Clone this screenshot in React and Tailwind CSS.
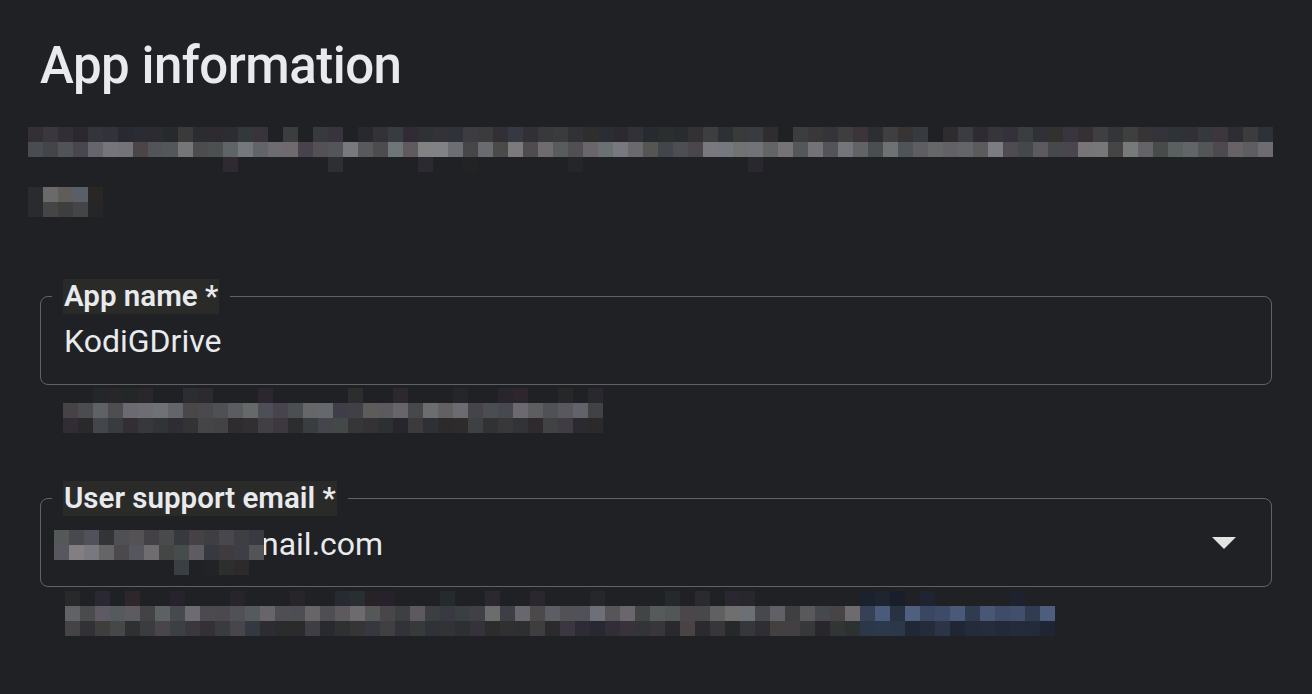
import React from 'react';

// deterministic noise so the blurred text looks the same every render
function makeRng(seed) {
  let s = seed;
  return () => {
    s = (s * 1103515245 + 12345) & 0x7fffffff;
    return s / 0x7fffffff;
  };
}

function cellColor(rand, lo, hi, blue) {
  const v = lo + rand() * (hi - lo);
  if (blue) {
    return `rgb(${Math.round(v * 0.7)}, ${Math.round(v * 0.85)}, ${Math.round(v * 1.15)})`;
  }
  const r = v + (rand() - 0.5) * 8;
  const g = v + (rand() - 0.5) * 6;
  const b = v + rand() * 8;
  return `rgb(${Math.round(r)}, ${Math.round(g)}, ${Math.round(b)})`;
}

function Pixelated({ seed, cols, rows, blueFrom = Infinity, className = '' }) {
  const rand = makeRng(seed);
  const grid = rows.map((row) =>
    Array.from({ length: cols }, (_, i) =>
      rand() < row.p ? cellColor(rand, row.lo, row.hi, i >= blueFrom) : 'transparent'
    )
  );

  return (
    <div className={`flex flex-col ${className}`}>
      {grid.map((row, r) => (
        <div key={r} className="flex">
          {row.map((c, i) => (
            <span key={i} className="block h-[15px] w-[15px] shrink-0" style={{ backgroundColor: c }} />
          ))}
        </div>
      ))}
    </div>
  );
}

const TEXT_ROWS = [
  { p: 0.93, lo: 40, hi: 62 },
  { p: 1, lo: 66, hi: 128 },
  { p: 0.08, lo: 36, hi: 48 },
];

const HELPER_ROWS = [
  { p: 0.35, lo: 36, hi: 44 },
  { p: 1, lo: 58, hi: 112 },
  { p: 1, lo: 40, hi: 72 },
];

const EMAIL_ROWS = [
  { p: 1, lo: 52, hi: 86 },
  { p: 1, lo: 44, hi: 128 },
  { p: 0.3, lo: 36, hi: 62 },
];

const SHORT_LINE = [
  ['#2a2b2e', '#6a6a6a', '#605d58', '#5a5e68', '#2a2624'],
  ['#2a2b2e', '#454545', '#3e3e3e', '#444548', '#262626'],
];

function OutlinedField({ label, children }) {
  return (
    <fieldset className="box-border h-[106px] w-[1232px] rounded-[8px] border border-[#5f6368] px-[11px]">
      <legend className="px-[11px]">
        <span className="block bg-[#2a2a29] px-[1px] text-[29.5px] leading-[35px] font-semibold text-[#e8eaed]">
          {label}
        </span>
      </legend>
      {children}
    </fieldset>
  );
}

export default function App() {
  return (
    <div className="min-h-screen w-full bg-[#202124] px-[40px] pt-[36px] font-['Roboto',sans-serif] text-[#e8eaed]">
      <h1 className="text-[51px] leading-[60px] font-medium tracking-[-0.5px] text-[#e8eaed]">App information</h1>

      {/* blurred description */}
      <Pixelated seed={11} cols={83} rows={TEXT_ROWS} className="ml-[-12px] mt-[31px]" />
      <div className="ml-[-12px] mt-[15px] flex flex-col">
        {SHORT_LINE.map((row, r) => (
          <div key={r} className="flex">
            {row.map((c, i) => (
              <span key={i} className="block h-[15px] w-[15px]" style={{ backgroundColor: c }} />
            ))}
          </div>
        ))}
      </div>

      <div className="mt-[62px]">
        <OutlinedField label="App name *">
          <div className="pl-[12px] pt-[7px] text-[32px] leading-[40px]">KodiGDrive</div>
        </OutlinedField>
        <Pixelated seed={23} cols={36} rows={HELPER_ROWS} className="ml-[23px] mt-[3px]" />
      </div>

      <div className="mt-[48px]">
        <OutlinedField label="User support email *">
          <div className="flex items-start justify-between pl-[12px] pr-[24px] pt-[8px]">
            <div className="flex items-start">
              <Pixelated seed={41} cols={14} rows={EMAIL_ROWS} className="relative z-10 ml-[-10px] mt-[6px]" />
              <span className="ml-[-3px] text-[32px] leading-[40px]">nail.com</span>
            </div>
            <svg width="24" height="12" viewBox="0 0 24 12" className="mt-[13px]">
              <path d="M0 0h24L12 12z" fill="#e3e3e3" />
            </svg>
          </div>
        </OutlinedField>
        <Pixelated seed={57} cols={66} rows={HELPER_ROWS} blueFrom={53} className="ml-[25px] mt-[4px]" />
      </div>
    </div>
  );
}
